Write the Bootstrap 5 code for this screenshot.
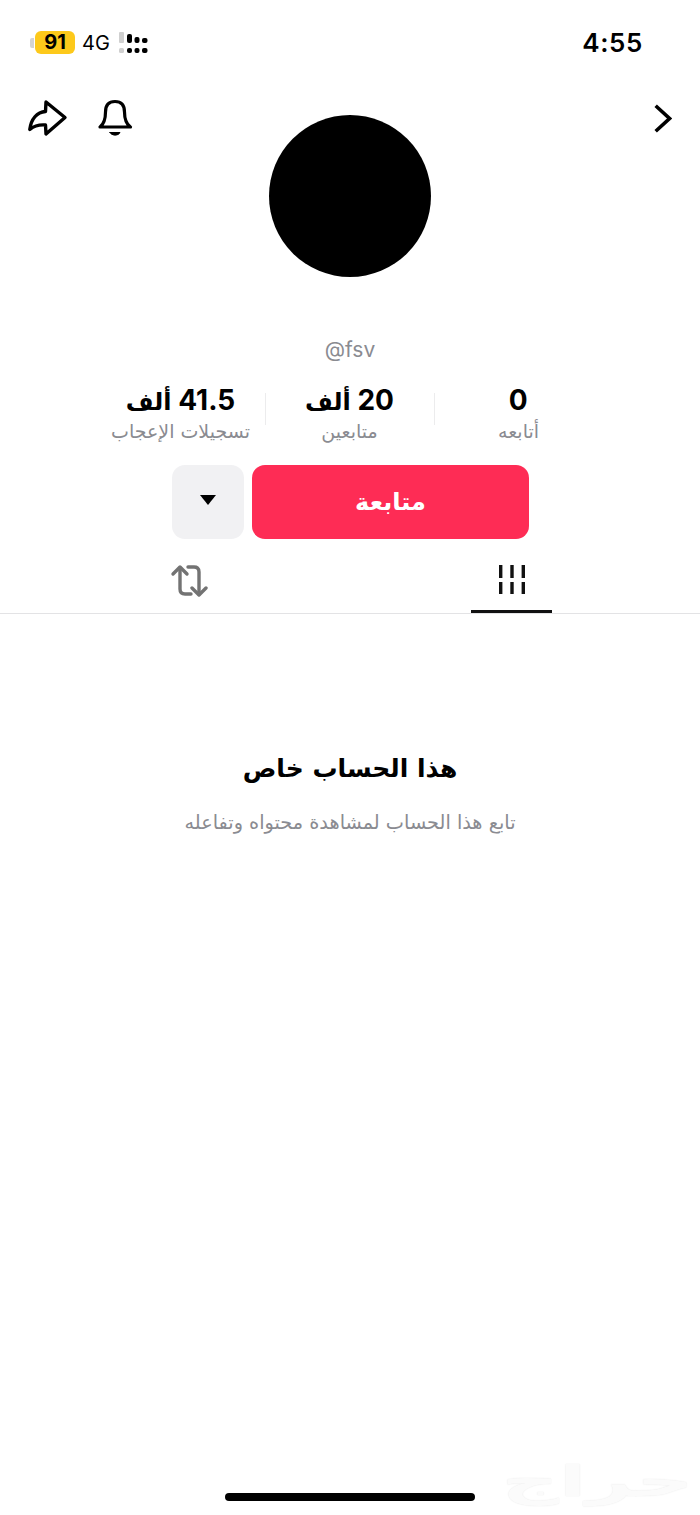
<!DOCTYPE html>
<html lang="ar">
<head>
  <meta charset="UTF-8">
  <title>fsv</title>
  <link href="https://cdn.jsdelivr.net/npm/bootstrap@5.3.2/dist/css/bootstrap.min.css" rel="stylesheet">
  <style>
    body { font-family: "DejaVu Sans", "Liberation Sans", sans-serif; background: #fff; color: #000; }
    .screen { width: 700px; height: 1515px; position: relative; overflow: hidden; }
    .latin { font-family: Inter, "Liberation Sans", sans-serif; }

    .status-bar { height: 85px; padding: 0 57px 0 30px; }
    .batt-tip { width: 4px; height: 10px; background: #d4d4d4; border-radius: 2px 0 0 2px; margin-right: 1px; }
    .batt { width: 40px; height: 23px; background: #fdc91b; border-radius: 6px; font-size: 20px; font-weight: 700; line-height: 23px; }
    .net { font-size: 20px; margin-left: 7px; margin-right: 8px; }
    .clock { font-size: 26px; font-weight: 600; letter-spacing: .6px; }

    .head-row { display: grid; grid-template-columns: 1fr 162px 1fr; height: 192px; padding: 0 28px; }
    .avatar { width: 162px; height: 162px; margin-top: 30px; background: #000; border-radius: 50%; }
    .head-btns { gap: 30px; padding-top: 14px; }

    .handle { margin-top: 60px; font-size: 21px; line-height: 26px; color: #8a8b91; }
    .stats { width: 507px; margin: 20px 0 0 96px; }
    .stat { width: 169px; position: relative; }
    .stat:not(:last-child)::after { content: ""; position: absolute; left: 0; top: 10px; width: 1px; height: 32px; background: #ececed; }
    .stat-num { font-family: Inter, "DejaVu Sans", sans-serif; font-size: 28px; font-weight: 700; letter-spacing: .5px; line-height: 35px; height: 36px; }
    .stat-unit { font-family: "DejaVu Sans", sans-serif; font-size: 24px; letter-spacing: 0; }
    .stat-lbl { font-size: 19px; line-height: 24px; color: #8a8b91; }

    .actions { margin-top: 22px; gap: 8px; padding-right: 171px; }
    .btn-follow { width: 277px; height: 74px; background: #fe2c55; color: #fff; border: 0; border-radius: 13px; font-size: 24px; font-weight: 700; }
    .btn-follow:hover { background: #fe2c55; color: #fff; }
    .btn-more { width: 72px; height: 74px; background: #f1f1f3; border: 0; border-radius: 13px; padding: 0 0 4px; }
    .caret-down { width: 0; height: 0; border-left: 8px solid transparent; border-right: 8px solid transparent; border-top: 10px solid #000; }

    .tabs { height: 75px; border-bottom: 1px solid #e3e3e5; gap: 242px; }
    .tab-item { width: 81px; height: 74px; padding-top: 23px; text-align: center; }
    .tab-on { border-bottom: 3px solid #111; }

    .private-box { margin-top: 135px; }
    .private-title { font-size: 25px; font-weight: 700; line-height: 40px; margin: 0; }
    .private-sub { font-size: 19.3px; line-height: 30px; color: #8a8b91; margin: 19px 0 0; }

    .home-bar { position: absolute; left: 225px; top: 1493px; width: 250px; height: 8px; background: #000; border-radius: 4px; }
    .wm { position: absolute; left: 500px; top: 1452px; width: 195px; text-align: center; font-size: 42px; line-height: 60px; font-weight: 700; color: #fbfbfb; text-shadow: 0 0 1px #e4e4e4; transform: scaleX(1.9); }
  </style>
</head>
<body>
  <div class="screen">

    <div class="status-bar d-flex justify-content-between align-items-center">
      <div class="d-flex align-items-center">
        <span class="batt-tip"></span>
        <span class="batt latin text-center">91</span>
        <span class="net latin">4G</span>
        <svg width="30" height="21" viewBox="0 0 30 21">
          <rect x="1" y="0" width="5" height="11" rx="1" fill="#cfcfcf"/>
          <rect x="1" y="16" width="5" height="5" rx="1.5" fill="#cfcfcf"/>
          <rect x="9" y="2" width="5" height="9" rx="2" fill="#000"/>
          <rect x="9" y="16" width="5" height="5" rx="2" fill="#000"/>
          <rect x="16.5" y="5" width="5" height="6" rx="2" fill="#000"/>
          <rect x="16.5" y="16" width="5" height="5" rx="2" fill="#000"/>
          <rect x="24" y="6" width="5.5" height="5" rx="2" fill="#000"/>
          <rect x="24" y="16" width="5.5" height="5" rx="2" fill="#000"/>
        </svg>
      </div>
      <span class="clock latin">4:55</span>
    </div>

    <div class="head-row">
      <div class="head-btns d-flex align-items-start">
        <svg width="40" height="38" viewBox="0 0 40 38" fill="none" stroke="#000" stroke-width="3.4" stroke-linejoin="round" stroke-linecap="round">
          <path d="M18 3 L37 18.5 L18 35 L17.5 26 C11 25.5 6 27 1.8 30.5 C3 20 9 13 17.5 12.5 Z"/>
        </svg>
        <svg width="36" height="38" viewBox="0 0 36 38" fill="none" stroke="#000" stroke-width="3.2" stroke-linejoin="round" stroke-linecap="round">
          <path d="M2 28 C6 25 7.5 21 7.5 13 C7.5 6 11 2.5 17 2.5 C23 2.5 26.5 6 26.5 13 C26.5 21 28 25 32.5 28 Z"/>
          <path d="M12 33.5 H22 C20.5 37 13.5 37 12 33.5 Z" fill="#000" stroke-width="1"/>
        </svg>
      </div>
      <div class="avatar"></div>
      <div class="d-flex justify-content-end align-items-start head-btns">
        <svg width="20" height="36" viewBox="0 0 20 36" fill="none" stroke="#000" stroke-width="3.6" stroke-linecap="square">
          <path d="M5 8 L17.5 19.5 L5 31"/>
        </svg>
      </div>
    </div>

    <div class="handle latin text-center">@fsv</div>

    <div class="stats d-flex" dir="rtl">
      <div class="stat text-center">
        <div class="stat-num">0</div>
        <div class="stat-lbl">أتابعه</div>
      </div>
      <div class="stat text-center">
        <div class="stat-num">20 <span class="stat-unit">ألف</span></div>
        <div class="stat-lbl">متابعين</div>
      </div>
      <div class="stat text-center">
        <div class="stat-num">41.5 <span class="stat-unit">ألف</span></div>
        <div class="stat-lbl">تسجيلات الإعجاب</div>
      </div>
    </div>

    <div class="actions d-flex" dir="rtl">
      <button class="btn btn-follow" type="button">متابعة</button>
      <button class="btn btn-more d-flex align-items-center justify-content-center" type="button"><span class="caret-down"></span></button>
    </div>

    <div class="tabs d-flex justify-content-center">
      <div class="tab-item">
        <svg width="38" height="36" viewBox="0 0 38 36" fill="none" stroke="#737373" stroke-width="3.4" stroke-linecap="round" stroke-linejoin="round">
          <path d="M10 6 V27 C10 31 12 32 15 32 H21"/>
          <path d="M3 12 L10 5 L17 12"/>
          <path d="M29 32 V10 C29 6 27 5 24 5 H18"/>
          <path d="M22 26 L29 33 L36 26"/>
        </svg>
      </div>
      <div class="tab-item tab-on">
        <svg width="28" height="32" viewBox="0 0 28 32" fill="#111">
          <rect x="1" y="3" width="3.4" height="13"/><rect x="12.3" y="3" width="3.4" height="13"/><rect x="23.6" y="3" width="3.4" height="13"/>
          <rect x="1" y="20" width="3.4" height="13"/><rect x="12.3" y="20" width="3.4" height="13"/><rect x="23.6" y="20" width="3.4" height="13"/>
        </svg>
      </div>
    </div>

    <div class="private-box text-center" dir="rtl">
      <h1 class="private-title">هذا الحساب خاص</h1>
      <p class="private-sub">تابع هذا الحساب لمشاهدة محتواه وتفاعله</p>
    </div>

    <div class="wm" dir="rtl">حراج</div>
    <div class="home-bar"></div>
  </div>
  <script src="https://cdn.jsdelivr.net/npm/bootstrap@5.3.2/dist/js/bootstrap.bundle.min.js"></script>
</body>
</html>
